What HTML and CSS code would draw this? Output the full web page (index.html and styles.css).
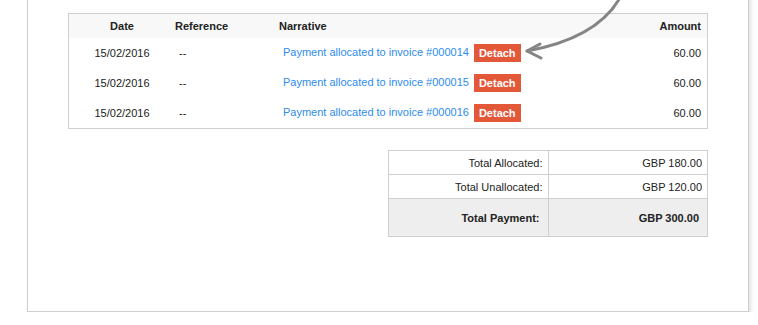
FILE: index.html
```html
<!DOCTYPE html>
<html lang="en">
<head>
    <meta charset="UTF-8">
    <title>Payment allocations</title>
    <link rel="stylesheet" href="styles.css">
</head>
<body>
    <div class="panel">
        <table class="allocations">
            <thead>
                <tr>
                    <th class="col-date">Date</th>
                    <th class="col-ref">Reference</th>
                    <th class="col-narrative">Narrative</th>
                    <th class="col-amount">Amount</th>
                </tr>
            </thead>
            <tbody>
                <tr>
                    <td class="col-date">15/02/2016</td>
                    <td class="col-ref">--</td>
                    <td class="col-narrative"><a href="#">Payment allocated to invoice #000014</a><span class="detach">Detach</span></td>
                    <td class="col-amount">60.00</td>
                </tr>
                <tr>
                    <td class="col-date">15/02/2016</td>
                    <td class="col-ref">--</td>
                    <td class="col-narrative"><a href="#">Payment allocated to invoice #000015</a><span class="detach">Detach</span></td>
                    <td class="col-amount">60.00</td>
                </tr>
                <tr>
                    <td class="col-date">15/02/2016</td>
                    <td class="col-ref">--</td>
                    <td class="col-narrative"><a href="#">Payment allocated to invoice #000016</a><span class="detach">Detach</span></td>
                    <td class="col-amount">60.00</td>
                </tr>
            </tbody>
        </table>

        <table class="totals">
            <tr>
                <td>Total Allocated:</td>
                <td>GBP 180.00</td>
            </tr>
            <tr>
                <td>Total Unallocated:</td>
                <td>GBP 120.00</td>
            </tr>
            <tr class="grand">
                <td>Total Payment:</td>
                <td>GBP 300.00</td>
            </tr>
        </table>

        <!-- hand-drawn pointer to the Detach button -->
        <svg class="pointer" width="110" height="70" viewBox="0 0 110 70">
            <path d="M98 0 C84 26 54 46 4 55" fill="none" stroke="#858585" stroke-width="3" stroke-linecap="round"/>
            <path d="M17 48 L4 55 L18 62" fill="none" stroke="#858585" stroke-width="3" stroke-linecap="round" stroke-linejoin="round"/>
        </svg>
    </div>
</body>
</html>
```

FILE: styles.css
```css
body {
    font-family: "Liberation Sans", Arial, sans-serif;
    font-size: 11px;
    color: #222;
    margin: 0;
    background: #fff;
}
.panel {
    position: relative;
    width: 640px;
    margin: -21px 0 0 27px;
    padding: 33px 40px 74px 40px;
    background: #fff;
    border: 1px solid #cfcfcf;
    box-shadow: 2px 3px 4px rgba(0, 0, 0, 0.12);
}
table {
    border-collapse: collapse;
}
.allocations {
    width: 640px;
    border: 1px solid #cfcfcf;
}
.allocations th {
    background: #f8f8f8;
    font-weight: bold;
    height: 24px;
    padding: 0;
    text-align: left;
}
.allocations td {
    height: 30px;
    padding: 0 0 0 4px;
}
.allocations .col-date {
    width: 106px;
    text-align: center;
    padding: 0;
}
.allocations .col-ref {
    width: 104px;
}
.allocations td.col-ref {
    width: 100px;
}
.allocations .col-amount {
    text-align: right;
    padding-right: 6px;
}
.allocations a {
    color: #2d8ceb;
    text-decoration: none;
}
.detach {
    display: inline-block;
    margin-left: 5px;
    padding: 0 5px;
    height: 18px;
    line-height: 18px;
    background: #e4583a;
    color: #fff;
    font-weight: bold;
    font-size: 11px;
    vertical-align: middle;
}
.totals {
    width: 320px;
    margin: 21px 0 0 auto;
    border: 1px solid #cfcfcf;
}
.totals td {
    border: 1px solid #cfcfcf;
    width: 50%;
    height: 23px;
    padding: 0 5px 0 0;
    text-align: right;
}
.totals .grand td {
    background: #eee;
    font-weight: bold;
    height: 37px;
    padding-right: 8px;
}
.pointer {
    position: absolute;
    left: 495px;
    top: 16px;
}
```
